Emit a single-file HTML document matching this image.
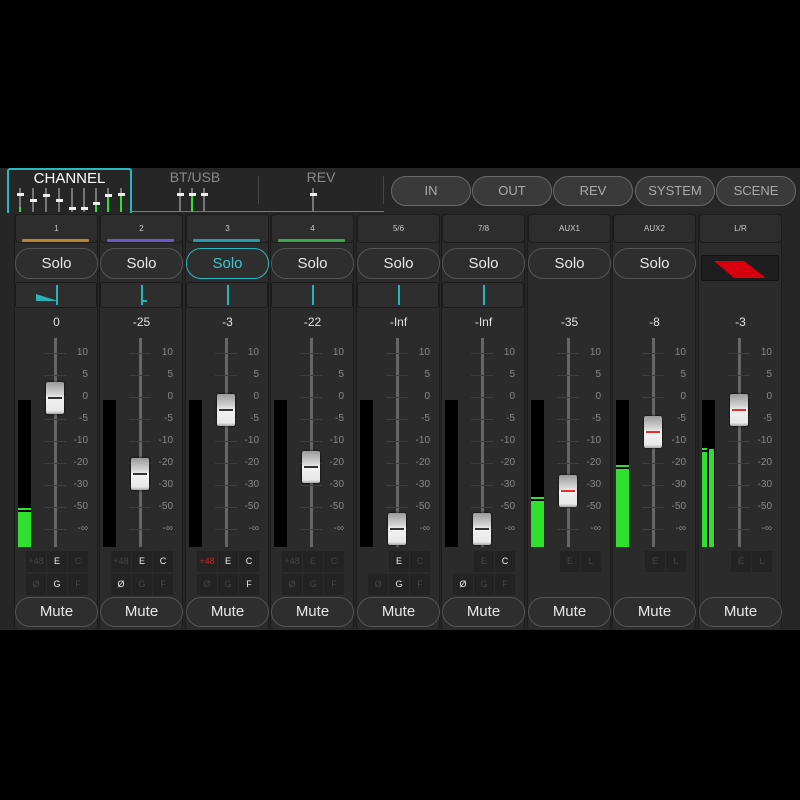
<!DOCTYPE html>
<html><head><meta charset="utf-8"><style>
*{margin:0;padding:0;box-sizing:border-box}
body{width:800px;height:800px;background:#000;position:relative;overflow:hidden;font-family:"Liberation Sans",sans-serif;color:#ddd}
.app{position:absolute;left:0;top:168px;width:800px;height:462px;background:#262626}
.tab{position:absolute;top:168px;height:45px;text-align:center;font-size:14px;color:#8a8a8a}
.sep{position:absolute;top:176px;width:1px;height:28px;background:#444}
.btn{position:absolute;top:176px;height:30px;width:80px;border:1px solid #6a6a6a;border-radius:15px;background:#3a3a3a;color:#aaa;font-size:13px;text-align:center;line-height:28px}
.s{position:absolute;top:214px;width:84px;height:416px;background:#2b2b2b;border-left:1px solid #1c1c1c;border-right:1px solid #1c1c1c;border-radius:4px}
.nm{position:absolute;left:0;top:0;width:83px;height:29px;border:1px solid #1c1c1c;border-radius:4px;background:#2d2d2d;font-size:8px;text-align:center;line-height:27px;color:#ccc}
.nm i{position:absolute;left:6px;right:8px;top:24px;height:3px;border-radius:1px}
.solo{position:absolute;left:0;top:34px;width:83px;height:31px;border:1px solid #555;border-radius:15px;background:#2e2e2e;font-size:15px;text-align:center;line-height:29px;color:#e8e8e8}
.pan{position:absolute;left:0;top:68px;width:82px;height:26px;border:1px solid #1a1a1a;border-radius:3px;background:#2e2e2e}
.pan b{position:absolute;left:40px;top:2px;width:2px;height:20px;background:#2ab3b8}
.val{position:absolute;left:0;width:83px;top:101px;font-size:12px;text-align:center;color:#e0e0e0}
.trk{position:absolute;left:39px;top:124px;width:3px;height:209px;background:#666}
.tk{position:absolute;left:29px;width:22px;height:1px;background:#3e3e3e}
.lb{position:absolute;left:50px;width:23px;text-align:right;font-size:10px;color:#888}
.m{position:absolute;left:3px;top:186px;width:13px;height:147px;background:#000}
.g{position:absolute;left:0;bottom:0;width:100%;background:#2fe02f}
.pk{position:absolute;left:0;width:100%;height:2px;background:#2fe02f}
.kn{position:absolute;left:31px;width:18px;height:32px;border-radius:2px;background:linear-gradient(#9a9a9a,#d8d8d8 40%,#f2f2f2 50%,#e8e8e8 90%,#aaa);box-shadow:0 0 2px #000}
.kn:after{content:"";position:absolute;left:2px;right:2px;top:15px;height:2px;background:#333}
.kn.r:after{background:#e03030}
.c{position:absolute;width:20px;height:21px;background:#232323;font-size:9px;text-align:center;line-height:21px;color:#444}
.c.on{color:#eee}
.mute{position:absolute;left:0;top:383px;width:83px;height:30px;border:1px solid #555;border-radius:15px;background:#2e2e2e;font-size:15px;text-align:center;line-height:28px;color:#e8e8e8}
</style></head><body>
<div class="app"></div>
<!-- tabs -->
<div class="tab" style="left:7px;width:125px;border:2px solid #2ab8c0;border-bottom:none;border-radius:3px 3px 0 0;color:#fff;font-size:15px;line-height:18px">CHANNEL</div>
<div style="position:absolute;left:131px;top:211px;width:253px;height:1px;background:#2a9aa0"></div>
<div class="tab" style="left:132px;width:126px;line-height:18px">BT/USB</div>
<div class="sep" style="left:258px"></div>
<div class="tab" style="left:259px;width:124px;line-height:18px">REV</div>
<div class="sep" style="left:383px"></div>
<svg style="position:absolute;left:14px;top:186px" width="370" height="26">
<g stroke="#777" stroke-width="2">
<line x1="6" y1="2" x2="6" y2="26"/><line x1="19" y1="2" x2="19" y2="26"/><line x1="32" y1="2" x2="32" y2="26"/><line x1="45" y1="2" x2="45" y2="26"/><line x1="58" y1="2" x2="58" y2="26"/><line x1="70" y1="2" x2="70" y2="26"/><line x1="82" y1="2" x2="82" y2="26"/><line x1="94" y1="2" x2="94" y2="26"/><line x1="107" y1="2" x2="107" y2="26"/>
<line x1="166" y1="2" x2="166" y2="26"/><line x1="190" y1="2" x2="190" y2="26"/><line x1="299" y1="2" x2="299" y2="26"/></g>
<g stroke="#3d3" stroke-width="2"><line x1="6" y1="21" x2="6" y2="26"/><line x1="82" y1="19" x2="82" y2="26"/><line x1="94" y1="9" x2="94" y2="26"/><line x1="107" y1="9" x2="107" y2="26"/><line x1="178" y1="8" x2="178" y2="26"/></g>
<line x1="178" y1="2" x2="178" y2="8" stroke="#777" stroke-width="2"/>
<g fill="#eee"><rect x="3" y="7" width="7" height="3"/><rect x="16" y="13" width="7" height="3"/><rect x="29" y="8" width="7" height="3"/><rect x="42" y="13" width="7" height="3"/><rect x="55" y="21" width="7" height="3"/><rect x="67" y="21" width="7" height="3"/><rect x="79" y="16" width="7" height="3"/><rect x="91" y="8" width="7" height="3"/><rect x="104" y="7" width="7" height="3"/><rect x="163" y="7" width="7" height="3"/><rect x="175" y="7" width="7" height="3"/><rect x="187" y="7" width="7" height="3"/><rect x="296" y="7" width="7" height="3"/></g>
</svg>
<div class="btn" style="left:391px">IN</div>
<div class="btn" style="left:472px">OUT</div>
<div class="btn" style="left:553px">REV</div>
<div class="btn" style="left:635px">SYSTEM</div>
<div class="btn" style="left:716px">SCENE</div>

<!-- strip 1 -->
<div class="s" style="left:14px">
<div class="nm">1<i style="background:#b8862c"></i></div>
<div class="solo">Solo</div>
<div class="pan"><svg style="position:absolute;left:20px;top:9px" width="22" height="10"><polygon points="0,2 22,9 0,9" fill="#2ab3b8"/></svg><b></b></div>
<div class="val">0</div>
<div class="m"><div class="g" style="height:35px"></div><div class="pk" style="bottom:37px"></div></div>
<div class="trk"></div>
<div class="tk" style="top:139px"></div><div class="tk" style="top:161px"></div><div class="tk" style="top:183px"></div><div class="tk" style="top:205px"></div><div class="tk" style="top:227px"></div><div class="tk" style="top:249px"></div><div class="tk" style="top:271px"></div><div class="tk" style="top:293px"></div><div class="tk" style="top:315px"></div>
<div class="lb" style="top:133px">10</div><div class="lb" style="top:155px">5</div><div class="lb" style="top:177px">0</div><div class="lb" style="top:199px">-5</div><div class="lb" style="top:221px">-10</div><div class="lb" style="top:243px">-20</div><div class="lb" style="top:265px">-30</div><div class="lb" style="top:287px">-50</div><div class="lb" style="top:309px">-∞</div>
<div class="kn" style="top:168px"></div>
<div class="c" style="left:11px;top:337px">+48</div><div class="c on" style="left:32px;top:337px">E</div><div class="c" style="left:53px;top:337px">C</div>
<div class="c" style="left:11px;top:360px">Ø</div><div class="c on" style="left:32px;top:360px">G</div><div class="c" style="left:53px;top:360px">F</div>
<div class="mute">Mute</div>
</div>

<!-- strip 2 -->
<div class="s" style="left:99px">
<div class="nm">2<i style="background:#6a5cc8"></i></div>
<div class="solo">Solo</div>
<div class="pan"><b></b><div style="position:absolute;left:41px;top:17px;width:5px;height:2px;background:#2ab3b8"></div></div>
<div class="val">-25</div>
<div class="m"></div>
<div class="trk"></div>
<div class="tk" style="top:139px"></div><div class="tk" style="top:161px"></div><div class="tk" style="top:183px"></div><div class="tk" style="top:205px"></div><div class="tk" style="top:227px"></div><div class="tk" style="top:249px"></div><div class="tk" style="top:271px"></div><div class="tk" style="top:293px"></div><div class="tk" style="top:315px"></div>
<div class="lb" style="top:133px">10</div><div class="lb" style="top:155px">5</div><div class="lb" style="top:177px">0</div><div class="lb" style="top:199px">-5</div><div class="lb" style="top:221px">-10</div><div class="lb" style="top:243px">-20</div><div class="lb" style="top:265px">-30</div><div class="lb" style="top:287px">-50</div><div class="lb" style="top:309px">-∞</div>
<div class="kn" style="top:244px"></div>
<div class="c" style="left:11px;top:337px">+48</div><div class="c on" style="left:32px;top:337px">E</div><div class="c on" style="left:53px;top:337px">C</div>
<div class="c on" style="left:11px;top:360px">Ø</div><div class="c" style="left:32px;top:360px">G</div><div class="c" style="left:53px;top:360px">F</div>
<div class="mute">Mute</div>
</div>

<!-- strip 3 -->
<div class="s" style="left:185px">
<div class="nm">3<i style="background:#2a9aa8"></i></div>
<div class="solo" style="border-color:#2ab8c0;color:#3cc8cc">Solo</div>
<div class="pan"><b></b></div>
<div class="val">-3</div>
<div class="m"></div>
<div class="trk"></div>
<div class="tk" style="top:139px"></div><div class="tk" style="top:161px"></div><div class="tk" style="top:183px"></div><div class="tk" style="top:205px"></div><div class="tk" style="top:227px"></div><div class="tk" style="top:249px"></div><div class="tk" style="top:271px"></div><div class="tk" style="top:293px"></div><div class="tk" style="top:315px"></div>
<div class="lb" style="top:133px">10</div><div class="lb" style="top:155px">5</div><div class="lb" style="top:177px">0</div><div class="lb" style="top:199px">-5</div><div class="lb" style="top:221px">-10</div><div class="lb" style="top:243px">-20</div><div class="lb" style="top:265px">-30</div><div class="lb" style="top:287px">-50</div><div class="lb" style="top:309px">-∞</div>
<div class="kn" style="top:180px"></div>
<div class="c" style="left:11px;top:337px;color:#d02020">+48</div><div class="c on" style="left:32px;top:337px">E</div><div class="c on" style="left:53px;top:337px">C</div>
<div class="c" style="left:11px;top:360px">Ø</div><div class="c" style="left:32px;top:360px">G</div><div class="c on" style="left:53px;top:360px">F</div>
<div class="mute">Mute</div>
</div>

<!-- strip 4 -->
<div class="s" style="left:270px">
<div class="nm">4<i style="background:#3aa84a"></i></div>
<div class="solo">Solo</div>
<div class="pan"><b></b></div>
<div class="val">-22</div>
<div class="m"></div>
<div class="trk"></div>
<div class="tk" style="top:139px"></div><div class="tk" style="top:161px"></div><div class="tk" style="top:183px"></div><div class="tk" style="top:205px"></div><div class="tk" style="top:227px"></div><div class="tk" style="top:249px"></div><div class="tk" style="top:271px"></div><div class="tk" style="top:293px"></div><div class="tk" style="top:315px"></div>
<div class="lb" style="top:133px">10</div><div class="lb" style="top:155px">5</div><div class="lb" style="top:177px">0</div><div class="lb" style="top:199px">-5</div><div class="lb" style="top:221px">-10</div><div class="lb" style="top:243px">-20</div><div class="lb" style="top:265px">-30</div><div class="lb" style="top:287px">-50</div><div class="lb" style="top:309px">-∞</div>
<div class="kn" style="top:237px"></div>
<div class="c" style="left:11px;top:337px">+48</div><div class="c" style="left:32px;top:337px">E</div><div class="c" style="left:53px;top:337px">C</div>
<div class="c" style="left:11px;top:360px">Ø</div><div class="c" style="left:32px;top:360px">G</div><div class="c" style="left:53px;top:360px">F</div>
<div class="mute">Mute</div>
</div>

<!-- strip 5/6 -->
<div class="s" style="left:356px">
<div class="nm">5/6</div>
<div class="solo">Solo</div>
<div class="pan"><b></b></div>
<div class="val">-Inf</div>
<div class="m"></div>
<div class="trk"></div>
<div class="tk" style="top:139px"></div><div class="tk" style="top:161px"></div><div class="tk" style="top:183px"></div><div class="tk" style="top:205px"></div><div class="tk" style="top:227px"></div><div class="tk" style="top:249px"></div><div class="tk" style="top:271px"></div><div class="tk" style="top:293px"></div><div class="tk" style="top:315px"></div>
<div class="lb" style="top:133px">10</div><div class="lb" style="top:155px">5</div><div class="lb" style="top:177px">0</div><div class="lb" style="top:199px">-5</div><div class="lb" style="top:221px">-10</div><div class="lb" style="top:243px">-20</div><div class="lb" style="top:265px">-30</div><div class="lb" style="top:287px">-50</div><div class="lb" style="top:309px">-∞</div>
<div class="kn" style="top:299px"></div>
<div class="c on" style="left:32px;top:337px">E</div><div class="c" style="left:53px;top:337px">C</div>
<div class="c" style="left:11px;top:360px">Ø</div><div class="c on" style="left:32px;top:360px">G</div><div class="c" style="left:53px;top:360px">F</div>
<div class="mute">Mute</div>
</div>

<!-- strip 7/8 -->
<div class="s" style="left:441px">
<div class="nm">7/8</div>
<div class="solo">Solo</div>
<div class="pan"><b></b></div>
<div class="val">-Inf</div>
<div class="m"></div>
<div class="trk"></div>
<div class="tk" style="top:139px"></div><div class="tk" style="top:161px"></div><div class="tk" style="top:183px"></div><div class="tk" style="top:205px"></div><div class="tk" style="top:227px"></div><div class="tk" style="top:249px"></div><div class="tk" style="top:271px"></div><div class="tk" style="top:293px"></div><div class="tk" style="top:315px"></div>
<div class="lb" style="top:133px">10</div><div class="lb" style="top:155px">5</div><div class="lb" style="top:177px">0</div><div class="lb" style="top:199px">-5</div><div class="lb" style="top:221px">-10</div><div class="lb" style="top:243px">-20</div><div class="lb" style="top:265px">-30</div><div class="lb" style="top:287px">-50</div><div class="lb" style="top:309px">-∞</div>
<div class="kn" style="top:299px"></div>
<div class="c" style="left:32px;top:337px">E</div><div class="c on" style="left:53px;top:337px">C</div>
<div class="c on" style="left:11px;top:360px">Ø</div><div class="c" style="left:32px;top:360px">G</div><div class="c" style="left:53px;top:360px">F</div>
<div class="mute">Mute</div>
</div>

<!-- AUX1 -->
<div class="s" style="left:527px">
<div class="nm">AUX1</div>
<div class="solo">Solo</div>
<div class="val">-35</div>
<div class="m"><div class="g" style="height:46px"></div><div class="pk" style="bottom:48px"></div></div>
<div class="trk"></div>
<div class="tk" style="top:139px"></div><div class="tk" style="top:161px"></div><div class="tk" style="top:183px"></div><div class="tk" style="top:205px"></div><div class="tk" style="top:227px"></div><div class="tk" style="top:249px"></div><div class="tk" style="top:271px"></div><div class="tk" style="top:293px"></div><div class="tk" style="top:315px"></div>
<div class="lb" style="top:133px">10</div><div class="lb" style="top:155px">5</div><div class="lb" style="top:177px">0</div><div class="lb" style="top:199px">-5</div><div class="lb" style="top:221px">-10</div><div class="lb" style="top:243px">-20</div><div class="lb" style="top:265px">-30</div><div class="lb" style="top:287px">-50</div><div class="lb" style="top:309px">-∞</div>
<div class="kn r" style="top:261px"></div>
<div class="c" style="left:32px;top:337px">E</div><div class="c" style="left:53px;top:337px">L</div>
<div class="mute">Mute</div>
</div>

<!-- AUX2 -->
<div class="s" style="left:612px">
<div class="nm">AUX2</div>
<div class="solo">Solo</div>
<div class="val">-8</div>
<div class="m"><div class="g" style="height:78px"></div><div class="pk" style="bottom:80px"></div></div>
<div class="trk"></div>
<div class="tk" style="top:139px"></div><div class="tk" style="top:161px"></div><div class="tk" style="top:183px"></div><div class="tk" style="top:205px"></div><div class="tk" style="top:227px"></div><div class="tk" style="top:249px"></div><div class="tk" style="top:271px"></div><div class="tk" style="top:293px"></div><div class="tk" style="top:315px"></div>
<div class="lb" style="top:133px">10</div><div class="lb" style="top:155px">5</div><div class="lb" style="top:177px">0</div><div class="lb" style="top:199px">-5</div><div class="lb" style="top:221px">-10</div><div class="lb" style="top:243px">-20</div><div class="lb" style="top:265px">-30</div><div class="lb" style="top:287px">-50</div><div class="lb" style="top:309px">-∞</div>
<div class="kn r" style="top:202px"></div>
<div class="c" style="left:32px;top:337px">E</div><div class="c" style="left:53px;top:337px">L</div>
<div class="mute">Mute</div>
</div>

<!-- L/R -->
<div class="s" style="left:698px">
<div class="nm">L/R</div>
<div style="position:absolute;left:2px;top:41px;width:78px;height:26px;background:#1e1e1e;border:1px solid #111;border-radius:3px"><svg width="78" height="26"><polygon points="12,5 42,5 64,22 32,22" fill="#d8000c"/></svg></div>
<div class="val">-3</div>
<div class="m" style="background:#000"><div class="g" style="width:5px;height:95px"></div><div class="pk" style="width:5px;bottom:97px"></div><div class="g" style="left:7px;width:5px;height:98px"></div></div>
<div class="trk"></div>
<div class="tk" style="top:139px"></div><div class="tk" style="top:161px"></div><div class="tk" style="top:183px"></div><div class="tk" style="top:205px"></div><div class="tk" style="top:227px"></div><div class="tk" style="top:249px"></div><div class="tk" style="top:271px"></div><div class="tk" style="top:293px"></div><div class="tk" style="top:315px"></div>
<div class="lb" style="top:133px">10</div><div class="lb" style="top:155px">5</div><div class="lb" style="top:177px">0</div><div class="lb" style="top:199px">-5</div><div class="lb" style="top:221px">-10</div><div class="lb" style="top:243px">-20</div><div class="lb" style="top:265px">-30</div><div class="lb" style="top:287px">-50</div><div class="lb" style="top:309px">-∞</div>
<div class="kn r" style="top:180px"></div>
<div class="c" style="left:32px;top:337px">E</div><div class="c" style="left:53px;top:337px">L</div>
<div class="mute">Mute</div>
</div>
</body></html>
